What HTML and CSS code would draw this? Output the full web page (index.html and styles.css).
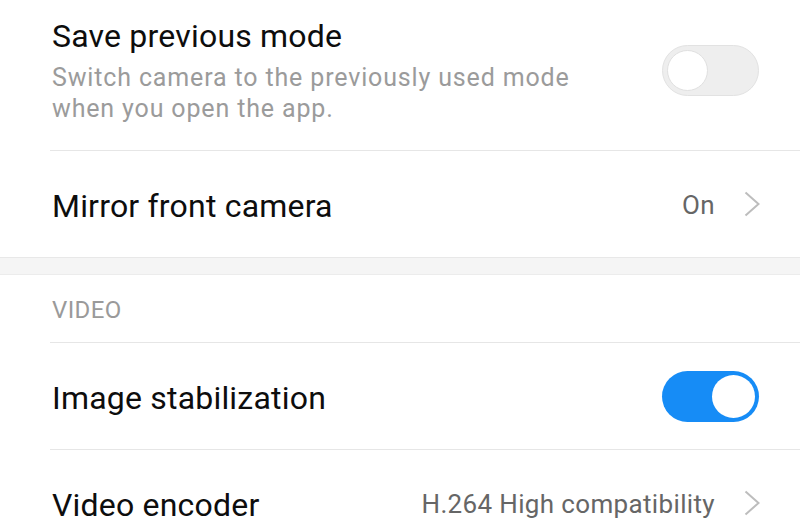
FILE: index.html
```html
<!DOCTYPE html>
<html>
<head>
<meta charset="utf-8">
<link rel="stylesheet" href="styles.css">
</head>
<body>
<div class="list">
  <div class="row row-first">
    <div class="text">
      <div class="title">Save previous mode</div>
      <div class="sub">Switch camera to the previously used mode<br>when you open the app.</div>
    </div>
    <div class="toggle off"><div class="knob"></div></div>
  </div>
  <div class="row row-plain">
    <div class="title title-mid">Mirror front camera</div>
    <div class="value">
      <span>On</span>
      <svg class="chev" width="16" height="26" viewBox="0 0 16 26"><polyline points="1.5,1.5 14.5,13 1.5,24.5" fill="none" stroke="#bdbdbd" stroke-width="2"/></svg>
    </div>
  </div>
  <div class="band"></div>
  <div class="header">VIDEO</div>
  <div class="row">
    <div class="title title-mid">Image stabilization</div>
    <div class="toggle on"><div class="knob"></div></div>
  </div>
  <div class="row row-plain">
    <div class="title title-mid">Video encoder</div>
    <div class="value">
      <span>H.264 High compatibility</span>
      <svg class="chev" width="16" height="26" viewBox="0 0 16 26"><polyline points="1.5,1.5 14.5,13 1.5,24.5" fill="none" stroke="#bdbdbd" stroke-width="2"/></svg>
    </div>
  </div>
</div>
</body>
</html>
```
FILE: styles.css
```css
html, body {
  margin: 0;
  padding: 0;
  background: #ffffff;
  overflow: hidden;
}
body {
  font-family: Roboto, "Noto Sans", sans-serif;
  width: 800px;
  height: 532px;
}
.list {
  display: flex;
  flex-direction: column;
}
.row {
  display: flex;
  align-items: center;
  justify-content: space-between;
  margin-left: 50px;
  padding-right: 41px;
  height: 106px;
  border-bottom: 1px solid #e6e6e6;
}
.row-first {
  margin-top: -13px;
  height: auto;
  padding-top: 29px;
  padding-bottom: 26px;
}
.row-plain {
  border-bottom: none;
}
.text {
  display: flex;
  flex-direction: column;
  gap: 6px;
}
.title {
  font-size: 32px;
  line-height: 40px;
  letter-spacing: 0.2px;
  color: #0d0d0d;
  padding-left: 2px;
}
.title-mid {
  padding-top: 4px;
}
.sub {
  font-size: 25px;
  line-height: 31px;
  letter-spacing: 0.85px;
  color: #9b9b9b;
  padding-left: 2px;
}
.value {
  display: flex;
  align-items: center;
  gap: 29px;
  font-size: 26px;
  letter-spacing: 0.35px;
  color: #666666;
  margin-right: -1px;
  padding-top: 2px;
}
.chev {
  display: block;
  margin-top: -3px;
}
.band {
  height: 16px;
  background: #f5f5f5;
  border-top: 1px solid #e8e8e8;
  border-bottom: 1px solid #ececec;
}
.header {
  height: 67px;
  box-sizing: border-box;
  padding-top: 2px;
  padding-left: 2px;
  margin-left: 50px;
  display: flex;
  align-items: center;
  font-size: 24px;
  letter-spacing: 0.4px;
  color: #9a9a9a;
  border-bottom: 1px solid #e6e6e6;
}
.header {
  height: 68px;
}
.toggle {
  width: 97px;
  height: 51px;
  border-radius: 26px;
  box-sizing: border-box;
  display: flex;
  align-items: center;
}
.toggle.off {
  background: #eeeeee;
  border: 1px solid #e2e2e2;
  padding-left: 4px;
}
.toggle.off .knob {
  width: 41px;
  height: 41px;
  border-radius: 50%;
  background: #ffffff;
  border: 1px solid #e0e0e0;
  box-sizing: border-box;
}
.toggle.on {
  background: #168cf6;
  justify-content: flex-end;
  padding-right: 4px;
}
.toggle.on .knob {
  width: 43px;
  height: 43px;
  border-radius: 50%;
  background: #ffffff;
}
```
